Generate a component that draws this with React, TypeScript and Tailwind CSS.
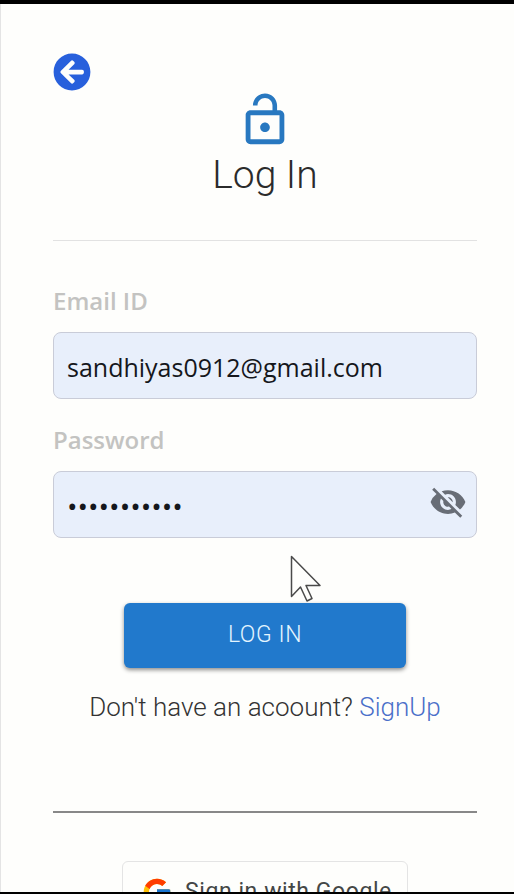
import { useState } from "react";
import { FaArrowCircleLeft } from "react-icons/fa";
import { FcGoogle } from "react-icons/fc";
import { MdLockOpen, MdVisibilityOff } from "react-icons/md";

const labelClass =
  "text-2xl leading-9 font-semibold text-[#c3c3c1] font-['Open_Sans',sans-serif]";
const inputClass =
  "h-[67px] w-full rounded-lg border border-[#c9ccd8] bg-[#e8effb] pt-0.5 pl-[13px] text-[#15171c] outline-none font-['Open_Sans',sans-serif]";

function Cursor() {
  return (
    <svg
      className="pointer-events-none absolute top-[551px] left-[290px] h-12 w-8"
      viewBox="0 0 32 48"
      fill="#fefefc"
      stroke="#4a4a4a"
      strokeWidth="1.5"
      strokeLinejoin="round"
      aria-hidden="true"
    >
      <path d="M1.5 1.5V41.5L10.500 32L17 46L22 43.500L16 30.500H30Z" />
    </svg>
  );
}

export default function App() {
  const [email, setEmail] = useState("sandhiyas0912@gmail.com");
  const [password, setPassword] = useState("sandhiyas12");

  return (
    <div className="relative h-screen overflow-hidden border-t-4 border-b-2 border-black bg-[#fefefc] font-[Roboto,sans-serif]">
      <main className="min-h-full border-l border-[#e4e4e4] pt-[49px] pr-[37px] pl-[52px]">
        <button type="button" aria-label="Back" className="block text-[#2860dc]">
          <FaArrowCircleLeft size={38} />
        </button>
        <header className="flex flex-col items-center border-b border-[#e2e2e2] pb-[39px]">
          <MdLockOpen size={58} className="text-[#2878c0]" />
          <h1 className="text-[39px] leading-[52px] font-light text-[#2b2b2b]">Log In</h1>
        </header>

        <form className="flex flex-col pt-[42px]" onSubmit={(e) => e.preventDefault()}>
          <div className="flex flex-col gap-[13px]">
            <label htmlFor="email" className={labelClass}>
              Email ID
            </label>
            <input
              id="email"
              type="email"
              className={`${inputClass} text-[25px]`}
              value={email}
              onChange={(e) => setEmail(e.target.value)}
            />
          </div>
          <div className="mt-[23px] flex flex-col gap-[13px]">
            <label htmlFor="password" className={labelClass}>
              Password
            </label>
            <div className="relative">
              <input
                id="password"
                type="password"
                className={`${inputClass} text-[28px]`}
                value={password}
                onChange={(e) => setPassword(e.target.value)}
              />
              <button
                type="button"
                aria-label="Show password"
                className="absolute top-3 right-[10px] text-[#686d76]"
              >
                <MdVisibilityOff size={38} />
              </button>
            </div>
          </div>
          <button
            type="submit"
            className="mt-[65px] h-[65px] w-2/3 self-center rounded-md bg-[#2179cc] text-[23px] font-light tracking-wide text-[#e3f5ff] shadow-[0_2px_4px_rgba(0,0,0,0.45)]"
          >
            LOG IN
          </button>
        </form>

        <p className="mt-[21px] text-center text-[26px] leading-9 font-light text-[#333333]">
          Don't have an acoount?{" "}
          <a href="#signup" className="text-[#4a6fc9]">
            SignUp
          </a>
        </p>

        <hr className="mt-[86px] border-t-2 border-[#888888]" />

        <button
          type="button"
          className="mx-auto mt-12 flex h-[62px] w-[286px] items-center justify-start gap-3 rounded-md border border-[#e4e4e4] pl-[18px] text-[23px] tracking-wide text-[#444746]"
        >
          <FcGoogle size={32} />
          Sign in with Google
        </button>
      </main>
      <Cursor />
    </div>
  );
}
